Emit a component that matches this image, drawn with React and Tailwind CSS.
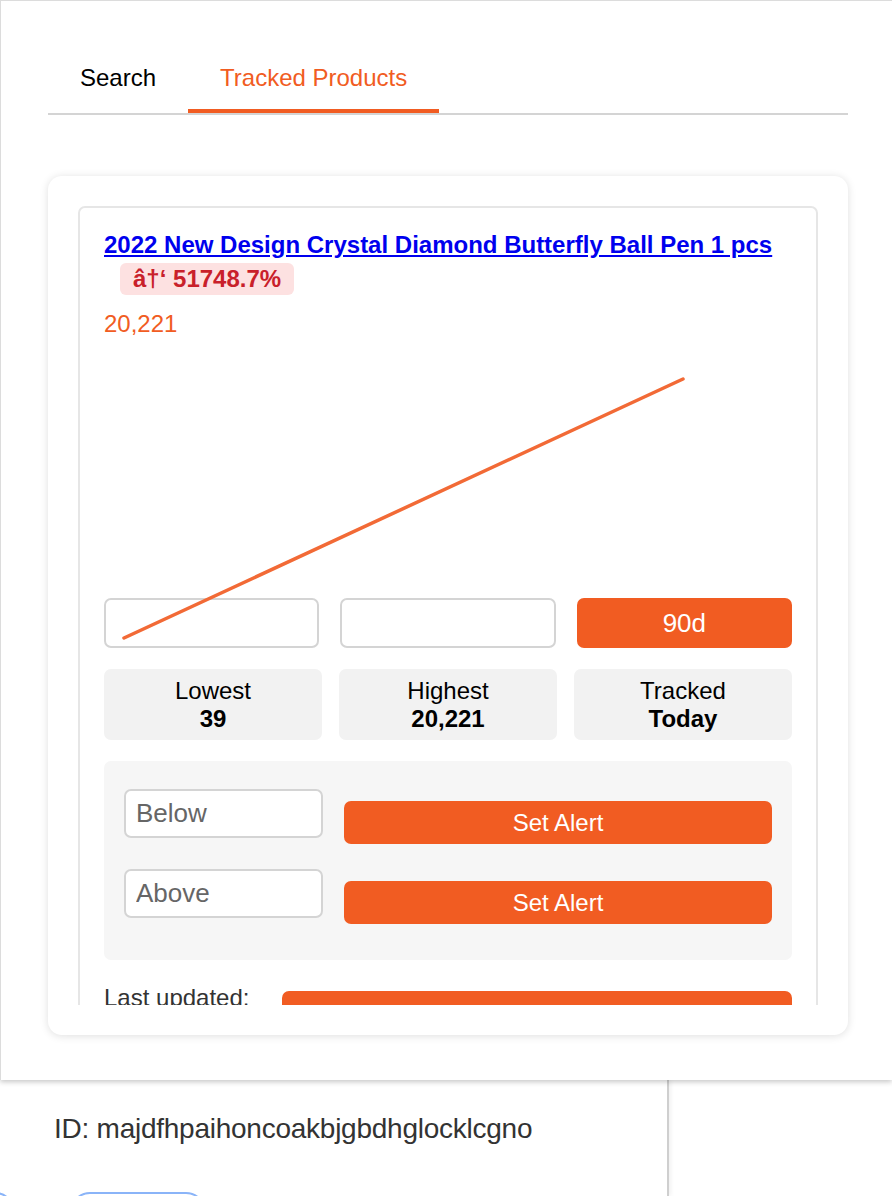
import React from 'react';

const ORANGE = 'bg-[#f15c22]';

function Tabs() {
  return (
    <div className="flex border-b-2 border-[#d4d4d4]">
      <button className="px-[32px] pt-[20px] pb-[18px] border-b-4 border-transparent text-[24px] leading-[26px] text-black">
        Search
      </button>
      <button className="px-[32px] pt-[20px] pb-[18px] border-b-4 border-[#f15c22] text-[24px] leading-[26px] text-[#f15c22]">
        Tracked Products
      </button>
    </div>
  );
}

function Stat({ label, value }) {
  return (
    <div className="h-[71px] rounded-[7px] bg-[#f2f2f2] flex flex-col items-center justify-center text-[24px] leading-[28px] text-black">
      <span>{label}</span>
      <span className="font-bold">{value}</span>
    </div>
  );
}

function AlertRow({ placeholder }) {
  return (
    <div className="flex items-start gap-[21px]">
      <input
        placeholder={placeholder}
        className="w-[199px] h-[49px] rounded-[7px] border-2 border-[#d4d4d4] bg-white px-[10px] text-[26px] placeholder:text-[#666] outline-none"
      />
      <button className={`flex-1 mt-[12px] h-[43px] rounded-[7px] ${ORANGE} text-white text-[24px]`}>
        Set Alert
      </button>
    </div>
  );
}

function ProductCard() {
  return (
    <div className="rounded-[7px] border-2 border-[#e6e6e6] px-[24px] pt-[20px] pb-[30px]">
      <div className="leading-[34px] text-[24px]">
        <a href="#" className="font-bold text-[#0000ee] underline">
          2022 New Design Crystal Diamond Butterfly Ball Pen 1 pcs
        </a>
        <span className="inline-block ml-[16px] px-[13px] py-[2px] leading-[28px] rounded-[6px] bg-[#fde1e1] text-[#c9202a] font-bold">
          â†‘ 51748.7%
        </span>
      </div>
      <div className="mt-[14px] text-[24px] leading-[28px] text-[#f15c22]">20,221</div>

      {/* chart */}
      <div className="relative h-[260px]">
        <svg className="absolute left-0 top-0 w-full h-[320px] overflow-visible pointer-events-none z-10" viewBox="0 0 688 320" preserveAspectRatio="none">
          <line x1="20" y1="300" x2="579" y2="41" stroke="#f26a36" strokeWidth="3.5" strokeLinecap="round" />
        </svg>
      </div>

      <div className="grid grid-cols-3 gap-[21px]">
        <input className="h-[50px] rounded-[7px] border-2 border-[#d4d4d4] bg-white outline-none" />
        <input className="h-[50px] rounded-[7px] border-2 border-[#d4d4d4] bg-white outline-none" />
        <button className={`h-[50px] rounded-[7px] ${ORANGE} text-white text-[26px]`}>90d</button>
      </div>

      <div className="mt-[21px] grid grid-cols-3 gap-[17px]">
        <Stat label="Lowest" value="39" />
        <Stat label="Highest" value="20,221" />
        <Stat label="Tracked" value="Today" />
      </div>

      <div className="mt-[21px] rounded-[7px] bg-[#f6f6f6] px-[20px] pt-[28px] pb-[36px] flex flex-col gap-[25px]">
        <AlertRow placeholder="Below" />
        <AlertRow placeholder="Above" />
      </div>

      <div className="mt-[24px] flex items-start gap-[30px]">
        <div className="w-[148px] text-[24px] leading-[28px] text-[#333]">
          Last updated:
          <br />
          Today
        </div>
        <button className={`flex-1 mt-[7px] h-[56px] rounded-[7px] ${ORANGE} text-white text-[24px]`}>
          Refresh
        </button>
      </div>
    </div>
  );
}

export default function App() {
  return (
    <div className="w-[892px] h-[1196px] overflow-hidden bg-white font-['Liberation_Sans',Arial,sans-serif]">
      {/* popup */}
      <div className="relative z-10 h-[1080px] bg-white border-t border-l border-[#dcdcdc] shadow-[0_2px_5px_rgba(0,0,0,0.22)] pl-[47px] pt-[44px]">
        <div className="w-[800px]">
          <Tabs />
          <div className="mt-[61px] rounded-[14px] bg-white shadow-[0_1px_8px_rgba(0,0,0,0.13)] p-[30px]">
            <div className="h-[799px] overflow-hidden">
              <ProductCard />
            </div>
          </div>
        </div>
      </div>

      {/* page behind */}
      <div className="flex h-[116px]">
        <div className="w-[669px] h-full border-r-2 border-[#cfcfcf] shadow-[2px_0_4px_rgba(0,0,0,0.06)] pl-[54px] pt-[33px]">
          <div className="text-[28px] leading-[32px] text-[#333] tracking-[-0.25px]">
            ID: majdfhpaihoncoakbjgbdhglocklcgno
          </div>
          <div className="mt-[47px] -ml-[54px] flex">
            <div className="w-[40px] h-[40px] -ml-[25px] rounded-full border-2 border-[#8ab4f8]" />
            <div className="ml-[55px] w-[136px] h-[40px] rounded-full border-2 border-[#8ab4f8]" />
          </div>
        </div>
        <div className="flex-1" />
      </div>
    </div>
  );
}
